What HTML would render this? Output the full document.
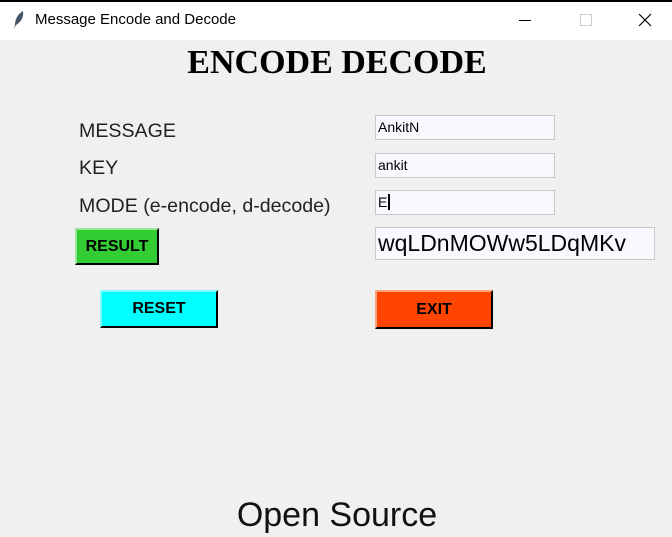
<!DOCTYPE html><html><head><style>
body{margin:0;width:672px;height:537px;background:#f0f0f0;font-family:"Liberation Sans",sans-serif;position:relative;overflow:hidden}
.a{position:absolute}
.tb{left:0;top:0;width:672px;height:40px;background:#fff;border-top:2px solid #000;box-sizing:border-box}
.lbl{font-size:19.6px;color:#222;white-space:nowrap}
.ent{background:#f8f8ff;border:1px solid #c8c8c8;box-sizing:border-box;font-size:14px;padding-left:2px;line-height:22px;color:#000}
.btn{box-sizing:border-box;border-top:2px solid rgba(255,255,255,.5);border-left:2px solid rgba(255,255,255,.5);border-right:2px solid #000;border-bottom:2px solid #000;font-weight:bold;font-size:16px;text-align:center;color:#000;font-family:"Liberation Sans Narrow","Liberation Sans",sans-serif}
</style></head><body>
<div class="a tb"></div>
<svg class="a" style="left:12px;top:10px" width="14" height="20" viewBox="0 0 14 20"><path d="M11 1 C6 4 3 9 3 15 L2 19 L4 15 C9 12 12 7 11 1Z" fill="#456"/></svg>
<div class="a" style="left:35px;top:11px;font-size:15px;color:#000">Message Encode and Decode</div>
<div class="a" style="left:519px;top:20px;width:12px;height:1px;background:#000"></div>
<div class="a" style="left:580px;top:14px;width:10px;height:10px;border:1px solid #ccc"></div>
<svg class="a" style="left:638px;top:13px" width="14" height="14"><path d="M1 1L13 13M13 1L1 13" stroke="#000" stroke-width="1.2"/></svg>
<div class="a" style="left:0;top:44px;width:674px;text-align:center;font-family:'Liberation Serif',serif;font-weight:bold;font-size:34px">ENCODE DECODE</div>
<div class="a lbl" style="left:79px;top:120px">MESSAGE</div>
<div class="a lbl" style="left:79px;top:157px">KEY</div>
<div class="a lbl" style="left:79px;top:195px">MODE (e-encode, d-decode)</div>
<div class="a ent" style="left:375px;top:115px;width:180px;height:25px">AnkitN</div>
<div class="a ent" style="left:375px;top:153px;width:180px;height:25px">ankit</div>
<div class="a ent" style="left:375px;top:190px;width:180px;height:25px">E<span style="border-left:2px solid #000;margin-left:1px"></span></div>
<div class="a ent" style="left:375px;top:227px;width:280px;height:33px;font-size:23px;line-height:31px">wqLDnMOWw5LDqMKv</div>
<div class="a btn" style="left:75px;top:228px;width:84px;height:37px;background:#32cd32;line-height:33px">RESULT</div>
<div class="a btn" style="left:100px;top:290px;width:118px;height:38px;background:#00ffff;line-height:34px">RESET</div>
<div class="a btn" style="left:375px;top:290px;width:118px;height:39px;background:#ff4500;line-height:36px">EXIT</div>
<div class="a" style="left:0;top:496px;width:674px;text-align:center;font-size:34px;color:#111">Open Source</div>
</body></html>
